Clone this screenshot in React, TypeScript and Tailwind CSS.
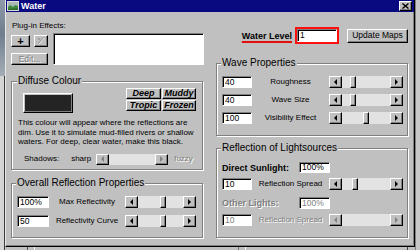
const raised =
  'border border-t-white border-l-white border-r-black border-b-black bg-[#c0c0c0] shadow-[inset_-1px_-1px_0_#808080]'
const sunken =
  'border border-t-[#808080] border-l-[#808080] border-r-white border-b-white bg-white shadow-[inset_1px_1px_0_#000]'
const group =
  'border border-[#808080] shadow-[1px_1px_0_#fff,inset_1px_1px_0_#fff] min-w-0 m-0'
const legend = 'ml-[-1px] bg-[#c0c0c0] px-[1px] text-[10px] leading-[12px] text-black'
const greyText = 'text-[#808080] [text-shadow:1px_1px_0_#fff]'

const Arrow = ({ dir, disabled = false }: { dir: 'left' | 'right'; disabled?: boolean }) => {
  const tri =
    dir === 'left'
      ? disabled
        ? 'border-r-[3px] border-r-[#808080]'
        : 'border-r-[3px] border-r-black'
      : disabled
        ? 'border-l-[3px] border-l-[#808080]'
        : 'border-l-[3px] border-l-black'
  return (
    <div className={`${raised} flex h-full w-[13px] shrink-0 items-center justify-center`}>
      <span className={`h-0 w-0 border-y-[3px] border-y-transparent ${tri}`} />
    </div>
  )
}

type ScrollProps = { className: string; pos?: number; disabled?: boolean }

const ScrollBar = ({ className, pos, disabled = false }: ScrollProps) => (
  <div className={`flex shrink-0 ${className}`}>
    <Arrow dir="left" disabled={disabled} />
    <div className="flex flex-1 bg-[#e2e2e2]">
      {pos !== undefined && (
        <div
          className={`${raised} h-full w-[6px] shrink-0`}
          style={{ marginLeft: `calc(${pos} * (100% - 6px))` }}
        />
      )}
    </div>
    <Arrow dir="right" disabled={disabled} />
  </div>
)

const Edit = ({ value, className, disabled = false }: { value: string; className: string; disabled?: boolean }) => (
  <div
    className={`${sunken} flex shrink-0 items-center pl-[2px] text-[8.5px] leading-none ${
      disabled ? 'text-[#808080]' : 'text-black'
    } ${className}`}
  >
    {value}
  </div>
)

const waveRows = [
  { value: '40', label: 'Roughness', pos: 0.18 },
  { value: '40', label: 'Wave Size', pos: 0.18 },
  { value: '100', label: 'Visibility Effect', pos: 0.5 },
]

const overallRows = [
  { value: '100%', label: 'Max Reflectivity', pos: 0.56 },
  { value: '50', label: 'Reflectivity Curve', pos: 0.56 },
]

const presets = ['Deep', 'Muddy', 'Tropic', 'Frozen']

export default function App() {
  return (
    <div className="flex h-[250px] w-[420px] overflow-hidden bg-[#c0c0c0] font-['Liberation_Sans',Arial,sans-serif] text-[8px] leading-[10px] text-black">
      {/* desktop behind the dialog */}
      <div className="flex w-[5px] shrink-0 flex-col">
        <div className="h-[76px] bg-[linear-gradient(180deg,#8f9aa8_0%,#6f7e8e_45%,#a4adb6_100%)]" />
        <div className="flex-1 border-r border-r-[#3a3a3a] bg-[#d4d4d4]" />
      </div>

      <div className="flex w-[410px] shrink-0 flex-col">
        <div className="flex h-[247px] flex-col border-l border-r border-b border-l-[#e8e8e8] border-r-black border-b-black shadow-[inset_-1px_-1px_0_#808080]">
          {/* title bar */}
          <div className="flex h-[12px] items-center bg-[#0a0a80] pr-[2px]">
            <svg className="ml-[1px] shrink-0" width="12" height="10" viewBox="0 0 12 10">
              <rect width="12" height="10" fill="#d8dcd8" />
              <rect x="1" y="1" width="10" height="8" fill="#a9b8b4" />
              <path d="M1 6 L3 4 L6 6 L8 4 L11 5 V9 H1Z" fill="#3f8a3c" />
              <path d="M1 8 L11 7 V9 H1Z" fill="#2c6a2c" />
            </svg>
            <span className="ml-[2px] text-[9px] leading-none font-bold text-white">Water</span>
            <div className={`${raised} ml-auto flex h-[10px] w-[13px] items-center justify-center`}>
              <svg width="7" height="6" viewBox="0 0 7 6">
                <path d="M0.5 0.5 L6.5 5.5 M6.5 0.5 L0.5 5.5" stroke="#000" strokeWidth="1.4" />
              </svg>
            </div>
          </div>

          <div className="flex pl-[5px]">
            {/* left column */}
            <div className="flex w-[194px] shrink-0 flex-col">
              <p className="mt-[9px] ml-[1px]">Plug-in Effects:</p>
              <div className="mt-[2px] flex h-[32px]">
                <div className="flex w-[37px] flex-col">
                  <div className="mt-[2px] flex gap-[4px]">
                    <div className={`${raised} flex h-[12px] w-[19px] items-center justify-center text-[11px] leading-none font-bold`}>
                      +
                    </div>
                    <div className={`${raised} flex h-[12px] w-[14px] items-center justify-center`}>
                      <svg width="8" height="8" viewBox="0 0 8 8">
                        <path d="M1.5 7.5 L7 1" stroke="#fff" strokeWidth="1" />
                        <path d="M1 7 L6.5 0.5" stroke="#8a8a8a" strokeWidth="1" />
                        <path d="M1 1 L3 3 M3 1 L1 3" stroke="#9a9a9a" strokeWidth="0.8" />
                      </svg>
                    </div>
                  </div>
                  <div className={`${raised} mt-[6px] flex h-[12px] w-[37px] items-center justify-center text-[8.5px] leading-none ${greyText}`}>
                    Edit...
                  </div>
                </div>
                <div className={`${sunken} ml-[5px] h-[32px] w-[151px]`} />
              </div>

              <fieldset className={`${group} mt-[10px] h-[95px] w-[192px] px-[6px] py-0`}>
                <legend className={legend}>Diffuse Colour</legend>
                <div className="mt-[1px] flex items-start">
                  <div className={`${raised} mt-[5px] ml-[5px] h-[20px] w-[50px] p-[1px]`}>
                    <div className="h-full w-full bg-[#242424]" />
                  </div>
                  <div className="ml-auto grid grid-cols-[35px_34px] gap-[1px]">
                    {presets.map((p) => (
                      <div
                        key={p}
                        className={`${raised} flex h-[11px] items-center justify-center text-[9px] leading-none font-bold italic`}
                      >
                        {p}
                      </div>
                    ))}
                  </div>
                </div>
                <p className="mt-[5px] leading-[9.5px] whitespace-nowrap">
                  This colour will appear where the reflections are
                  <br />
                  dim. Use it to simulate mud-filled rivers or shallow
                  <br />
                  waters. For deep, clear water, make this black.
                </p>
                <div className="mt-[7px] flex h-[11px] items-center">
                  <span className="ml-[6px]">Shadows:</span>
                  <span className="ml-[12px]">sharp</span>
                  <ScrollBar className="ml-[5px] h-[11px] w-[72px]" disabled />
                  <span className={`ml-[6px] ${greyText}`}>fuzzy</span>
                </div>
              </fieldset>

              <fieldset className={`${group} mt-[7px] h-[61px] w-[192px] px-[5px] py-0`}>
                <legend className={`${legend} ml-0`}>Overall Reflection Properties</legend>
                <div className="mt-[7px] flex flex-col gap-[7px]">
                  {overallRows.map((r) => (
                    <div key={r.label} className="flex h-[12px] items-center">
                      <Edit value={r.value} className="h-[12px] w-[32px]" />
                      <span className="w-[76px] shrink-0 text-center">{r.label}</span>
                      <ScrollBar className="h-[12px] w-[71px]" pos={r.pos} />
                    </div>
                  ))}
                </div>
              </fieldset>
            </div>

            {/* right column */}
            <div className="ml-[11px] flex w-[192px] shrink-0 flex-col">
              <div className="mt-[15px] flex h-[17px] items-center justify-end">
                <span className="text-[9px] leading-[10px] font-bold underline decoration-[#e01010] decoration-2 underline-offset-[2px]">
                  Water Level
                </span>
                <div className="ml-[3px] h-[17px] w-[44px] border-2 border-[#ff1010] bg-[#ff1010]">
                  <Edit value="1" className="h-[13px] w-[40px]" />
                </div>
                <div className={`${raised} ml-[8px] flex h-[14px] w-[61px] items-center justify-center text-[8.5px] leading-none`}>
                  Update Maps
                </div>
              </div>

              <fieldset className={`${group} mt-[13px] h-[79px] w-[192px] px-[5px] py-0`}>
                <legend className={legend}>Wave Properties</legend>
                <div className="mt-[7px] flex flex-col gap-[6px]">
                  {waveRows.map((r) => (
                    <div key={r.label} className="flex h-[12px] items-center">
                      <Edit value={r.value} className="h-[12px] w-[30px]" />
                      <span className="w-[77px] shrink-0 text-center">{r.label}</span>
                      <ScrollBar className="h-[12px] w-[74px]" pos={r.pos} />
                    </div>
                  ))}
                </div>
              </fieldset>

              <fieldset className={`${group} mt-[6px] h-[96px] w-[192px] px-[5px] py-0`}>
                <legend className={legend}>Reflection of Lightsources</legend>
                <div className="mt-[8px] flex h-[11px] items-center">
                  <span className="w-[77px] shrink-0 text-[9px] font-bold">Direct Sunlight:</span>
                  <Edit value="100%" className="h-[11px] w-[31px]" />
                </div>
                <div className="mt-[5px] flex h-[12px] items-center">
                  <Edit value="10" className="h-[12px] w-[30px]" />
                  <span className="w-[77px] shrink-0 text-center">Reflection Spread</span>
                  <ScrollBar className="h-[12px] w-[74px]" pos={0.24} />
                </div>
                <div className="mt-[7px] flex h-[12px] items-center">
                  <span className={`w-[77px] shrink-0 text-[9px] font-bold ${greyText}`}>Other Lights:</span>
                  <Edit value="100%" className="h-[12px] w-[31px]" disabled />
                </div>
                <div className="mt-[5px] flex h-[12px] items-center">
                  <Edit value="10" className="h-[12px] w-[30px]" disabled />
                  <span className={`w-[77px] shrink-0 text-center ${greyText}`}>Reflection Spread</span>
                  <ScrollBar className="h-[12px] w-[74px]" disabled />
                </div>
              </fieldset>
            </div>
          </div>
        </div>

        {/* window edges below the dialog */}
        <div className="flex flex-1">
          <div className="ml-[22px] w-px bg-[#505050]" />
          <div className="ml-[6px] w-px bg-white" />
          <div className="ml-[203px] w-px bg-[#707070]" />
          <div className="ml-[6px] w-px bg-white" />
          <div className="ml-[161px] w-px bg-[#404040]" />
        </div>
      </div>

      <div className="flex-1 border-l border-l-[#808080] bg-[#c8c8c8]" />
    </div>
  )
}
